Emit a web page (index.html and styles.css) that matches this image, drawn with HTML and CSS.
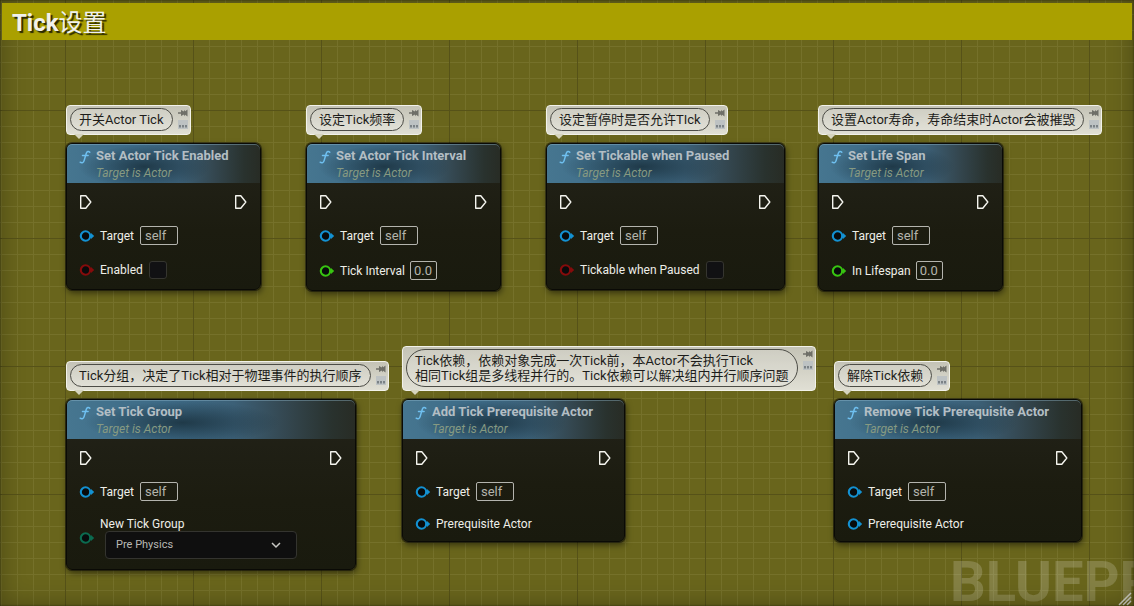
FILE: index.html
```
<!DOCTYPE html>
<html lang="zh-CN">
<head>
<meta charset="utf-8">
<meta name="viewport" content="width=device-width, initial-scale=1">
<title>Tick设置</title>
<link rel="stylesheet" href="styles.css">
<script src="graph.js" defer></script>
</head>
<body>
<svg class="defs" aria-hidden="true">
  <symbol id="exec" viewBox="0 0 14 16"><path d="M1.7 1.7h5.1l5 6.3-5 6.3H1.7z" fill="none" stroke="#f4f4ee" stroke-width="1.4" stroke-linejoin="round"/></symbol>
  <symbol id="pin" viewBox="0 0 16 14"><circle cx="6.500" cy="7" r="4.700" fill="#080b0c" stroke="currentColor" stroke-width="2.100"/><path d="M12 4l3.200 3-3.200 3z" fill="currentColor"/></symbol>
  <symbol id="func" viewBox="0 0 12 14"><path d="M10.8 2.3C9.600 1 7.900 1.300 7.300 3.300L5.100 10.600C4.600 12.500 2.900 13.400 1.200 12.200M3.500 5.600h5.600" fill="none" stroke="#6fc0f0" stroke-width="1.5" stroke-linecap="round"/></symbol>
  <symbol id="tack" viewBox="0 0 10 8"><path d="M0 3.300h3v1.400H0zM3 1l3 1.600V.8l1.200 1.400L9.500.6v6.800L7.200 5.800 6 7.200V5.400L3 7z" fill="#6f6f68"/></symbol>
  <symbol id="note" viewBox="0 0 10 9"><path d="M0 0h10v9H0z" fill="#bdc2c3"/><path d="M1 5h2v2.500H1zM4 5h2v2.500H4zM7 5h2v2.500H7z" fill="#7b8286"/></symbol>
</svg>
<main class="graph">
  <h1 class="graph-title">Tick<span class="han">设置</span></h1>
  <div class="watermark" aria-hidden="true">BLUEPR</div>
  <div class="canvas" id="canvas"></div>
  <svg class="grip" viewBox="0 0 14 14" aria-hidden="true"><path d="M1 13L13 1M5 13l8-8M9 13l4-4" stroke="#d6d6cc" stroke-width="1.500"/></svg>
</main>
</body>
</html>
```
FILE: graph.js
```
const icon = (id, cls) => `<svg class="${cls}" aria-hidden="true"><use href="#${id}"/></svg>`;

const nodes = [
  { x: 66, y: 143, w: 195, title: "Set Actor Tick Enabled", note: "开关Actor Tick", pin: { kind: "check", label: "Enabled" } },
  { x: 306, y: 143, w: 195, title: "Set Actor Tick Interval", note: "设定Tick频率", pin: { kind: "number", label: "Tick Interval" } },
  { x: 546, y: 143, w: 239, title: "Set Tickable when Paused", note: "设定暂停时是否允许TIck", pin: { kind: "check", label: "Tickable when Paused" } },
  { x: 818, y: 143, w: 185, title: "Set Life Span", note: "设置Actor寿命，寿命结束时Actor会被摧毁", pin: { kind: "number", label: "In Lifespan" } },
  { x: 66, y: 399, w: 290, title: "Set Tick Group", note: "Tick分组，决定了Tick相对于物理事件的执行顺序", pin: { kind: "choice", label: "New Tick Group" } },
  { x: 402, y: 399, w: 223, title: "Add Tick Prerequisite Actor", note: "Tick依赖，依赖对象完成一次Tick前，本Actor不会执行Tick<br>相同Tick组是多线程并行的。Tick依赖可以解决组内并行顺序问题", pin: { kind: "object", label: "Prerequisite Actor" } },
  { x: 834, y: 399, w: 248, title: "Remove Tick Prerequisite Actor", note: "解除Tick依赖", pin: { kind: "object", label: "Prerequisite Actor" } }
];

function pinRow(pin, id) {
  const label = `<label for="${id}">${pin.label}</label>`;
  switch (pin.kind) {
    case "check":
      return `<div class="row toggle">${icon("pin", "pin bool")}${label}<input class="check" type="checkbox" id="${id}"></div>`;
    case "number":
      return `<div class="row">${icon("pin", "pin float")}${label}<input class="field number" type="text" id="${id}" value="0.0"></div>`;
    case "choice":
      return `<div class="row choice">${icon("pin", "pin enum")}<div class="stack">${label}
        <select class="select" id="${id}"><option>Pre Physics</option></select></div></div>`;
    default:
      return `<div class="row plain">${icon("pin", "pin object")}<span>${pin.label}</span></div>`;
  }
}

document.getElementById("canvas").innerHTML = nodes.map((n, i) => `
  <section class="node" style="left:${n.x}px;top:${n.y}px;width:${n.w}px">
    <div class="bubble">
      <p class="note">${n.note}</p>
      <div class="tools">
        <button class="tool" type="button" aria-label="Pin comment">${icon("tack", "tack")}</button>
        <button class="tool" type="button" aria-label="Comment">${icon("note", "memo")}</button>
      </div>
    </div>
    <header class="head">
      ${icon("func", "func")}
      <div><h2 class="name">${n.title}</h2><p class="sub">Target is Actor</p></div>
    </header>
    <div class="body">
      <div class="flow">${icon("exec", "exec")}${icon("exec", "exec")}</div>
      <div class="row">${icon("pin", "pin object")}<label for="t${i}">Target</label><input class="field" type="text" id="t${i}" value="self"></div>
      ${pinRow(n.pin, "p" + i)}
    </div>
  </section>`).join("");
```
FILE: styles.css
```
* { box-sizing: border-box; }
body {
  margin: 0;
  background: #69651c;
  color: #eeeee8;
  font-family: Roboto, "Noto Sans CJK SC", sans-serif;
  font-size: 12px;
}
h1, h2, p { margin: 0; }
.defs { position: absolute; width: 0; height: 0; }
.graph {
  position: relative;
  min-height: 100vh;
  padding: 3px 2px 0;
  overflow: hidden;
  background-color: #69651c;
  background-image:
    linear-gradient(90deg, #565218 1px, transparent 1px),
    linear-gradient(#565218 1px, transparent 1px),
    linear-gradient(90deg, #75712a 1px, transparent 1px),
    linear-gradient(#75712a 1px, transparent 1px);
  background-size: 128px 128px, 128px 128px, 16px 16px, 16px 16px;
  background-position: 65px 0, 0 110px, 1px 0, 0 14px;
}
.graph::after {
  content: "";
  position: absolute;
  inset: 0;
  box-shadow: inset 0 0 24px rgba(0, 0, 0, .3), inset 0 0 2px #2d2b10;
  pointer-events: none;
}
.graph-title {
  position: relative;
  z-index: 1;
  height: 37px;
  padding-left: 10px;
  background: #aaa000;
  color: #f1f1ec;
  font-size: 24px;
  line-height: 40px;
  text-shadow: 2px 2px 1px #2a2800;
}
.han { font-weight: 400; }
.watermark {
  position: absolute;
  left: 950px;
  bottom: -12px;
  color: rgba(255, 255, 255, .18);
  font-size: 56px;
  font-weight: 700;
  line-height: 72px;
}
.grip { position: absolute; right: 2px; bottom: 0; width: 14px; height: 14px; }
.canvas { position: absolute; inset: 0; }

.node {
  position: absolute;
  border: 1px solid #0a0a06;
  border-radius: 6px;
  background: linear-gradient(#23231a, #1c1c10 60%, #191a0e);
  box-shadow: 0 0 0 1px rgba(10, 10, 5, .5), 1px 3px 6px rgba(0, 0, 0, .5);
}
.head {
  display: flex;
  gap: 5px;
  height: 39px;
  padding: 3px 0 0 12px;
  border-radius: 5px 5px 0 0;
  box-shadow: inset 0 1px 0 rgba(150, 190, 210, .4);
  background:
    radial-gradient(ellipse 34% 55% at 40% 58%, rgba(24, 46, 58, .8), transparent),
    linear-gradient(90deg, #467690, #3d6a86 35%, #3c6077 58%, #344750 76%, #29322e 92%, #282c25);
}
.func { width: 12px; height: 14px; margin-top: 3px; flex: none; }
.name { color: #b3bec4; font-size: 13px; line-height: 18px; font-weight: 700; white-space: nowrap; }
.sub { color: #869a82; font-size: 12px; line-height: 16px; font-style: italic; }
.body { display: flex; flex-direction: column; gap: 16px; padding: 11px 12px 10px; }
.flow { display: flex; justify-content: space-between; height: 16px; }
.exec { width: 14px; height: 16px; }
.row { display: flex; align-items: center; height: 19px; white-space: nowrap; }
.row.toggle { height: 18px; }
.row.plain { height: 14px; }
.row.choice { height: 42px; }
.pin { width: 16px; height: 14px; margin-right: 5px; flex: none; }
.pin.object { color: #1391d2; }
.pin.bool { color: #850b0b; }
.pin.float { color: #38c411; }
.pin.enum { color: #0b6b50; }
.field {
  width: 38px;
  height: 19px;
  margin-left: 6px;
  padding: 0 4px;
  border: 1px solid #b4b4ae;
  border-radius: 2px;
  background: transparent;
  color: #b4b4ac;
  font: 13px/17px Roboto, sans-serif;
}
.field.number { width: 27px; margin-left: 5px; padding: 0 3px; }
.check {
  appearance: none;
  width: 18px;
  height: 18px;
  margin: 0 0 0 6px;
  border: 1px solid #35352f;
  border-radius: 3px;
  background: #111113;
}
.stack { display: flex; flex-direction: column; line-height: 14px; }
.select {
  appearance: none;
  width: 192px;
  height: 28px;
  margin-left: 5px;
  padding: 0 10px;
  border: 1px solid #34342f;
  border-radius: 4px;
  color: #b8b8b4;
  font: 11px/26px Roboto, sans-serif;
  background: #0f0f0f url("data:image/svg+xml,%3Csvg xmlns='http://www.w3.org/2000/svg' width='10' height='7' fill='none' stroke='%23c8c8c4' stroke-width='1.500'%3E%3Cpath d='M1 1l4 4 4-4'/%3E%3C/svg%3E") no-repeat right 15px center;
}

.bubble {
  position: absolute;
  left: -1px;
  bottom: calc(100% + 9px);
  display: flex;
  padding: 2px 2px 3px 3px;
  border: 1px solid #f2f2ea;
  border-radius: 4px;
  background: linear-gradient(#c4c3b6, #e0dfd4);
  color: #1d1d1a;
  white-space: nowrap;
}
.bubble::after {
  content: "";
  position: absolute;
  left: 7px;
  top: 100%;
  border: 5px solid transparent;
  border-top-color: #d5d4be;
  border-bottom: 0;
}
.note {
  padding: 3px 8px;
  border: 1px solid #4c4c46;
  border-radius: 19px;
  background: rgba(255, 255, 255, .15);
  font-size: 13px;
  line-height: 15px;
}
.tools { display: flex; flex-direction: column; gap: 3px; padding: 1px 0 0 5px; }
.tool { display: block; padding: 0; border: 0; background: none; line-height: 0; }
.tack { width: 10px; height: 8px; }
.memo { width: 10px; height: 9px; }
```
